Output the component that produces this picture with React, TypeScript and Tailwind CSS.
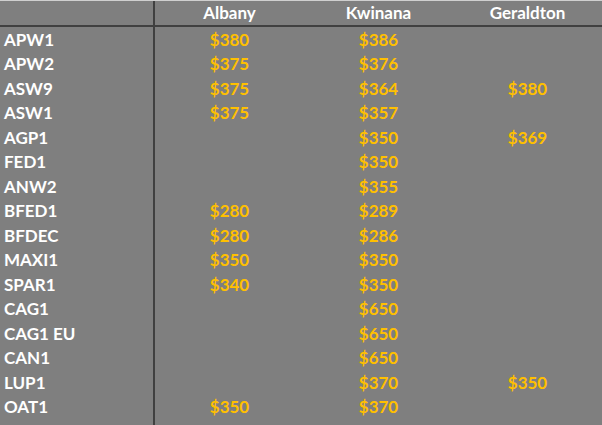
import React from "react";

const rows: [string, string, string, string][] = [
  ["APW1", "$380", "$386", ""],
  ["APW2", "$375", "$376", ""],
  ["ASW9", "$375", "$364", "$380"],
  ["ASW1", "$375", "$357", ""],
  ["AGP1", "", "$350", "$369"],
  ["FED1", "", "$350", ""],
  ["ANW2", "", "$355", ""],
  ["BFED1", "$280", "$289", ""],
  ["BFDEC", "$280", "$286", ""],
  ["MAXI1", "$350", "$350", ""],
  ["SPAR1", "$340", "$350", ""],
  ["CAG1", "", "$650", ""],
  ["CAG1 EU", "", "$650", ""],
  ["CAN1", "", "$650", ""],
  ["LUP1", "", "$370", "$350"],
  ["OAT1", "$350", "$370", ""],
];

export default function App() {
  return (
    <div
      className="w-[602px] h-[425px] overflow-hidden bg-[#7f7f7f] text-[17px] font-bold"
      style={{ fontFamily: "Lato, 'Open Sans', sans-serif" }}
    >
      <div className="h-px bg-[#cfcfcf]" />
      <div className="grid grid-cols-[155px_149px_149px_149px]">
        <div className="h-[26px] border-r-2 border-b-2 border-[#404040]" />
        <div className="h-[26px] border-b-2 border-[#404040] flex items-center justify-center text-white">Albany</div>
        <div className="h-[26px] border-b-2 border-[#404040] flex items-center justify-center text-white">Kwinana</div>
        <div className="h-[26px] border-b-2 border-[#404040] flex items-center justify-center text-white">Geraldton</div>
        {rows.map((r) => (
          <React.Fragment key={r[0]}>
            <div className="h-[24.5px] border-r-2 border-[#404040] flex items-center pl-[4px] text-white">{r[0]}</div>
            <div className="h-[24.5px] flex items-center justify-center text-[#ffc000]">{r[1]}</div>
            <div className="h-[24.5px] flex items-center justify-center text-[#ffc000]">{r[2]}</div>
            <div className="h-[24.5px] flex items-center justify-center text-[#ffc000]">{r[3]}</div>
          </React.Fragment>
        ))}
        <div className="h-[10px] border-r-2 border-[#404040]" />
        <div />
        <div />
        <div />
      </div>
    </div>
  );
}
